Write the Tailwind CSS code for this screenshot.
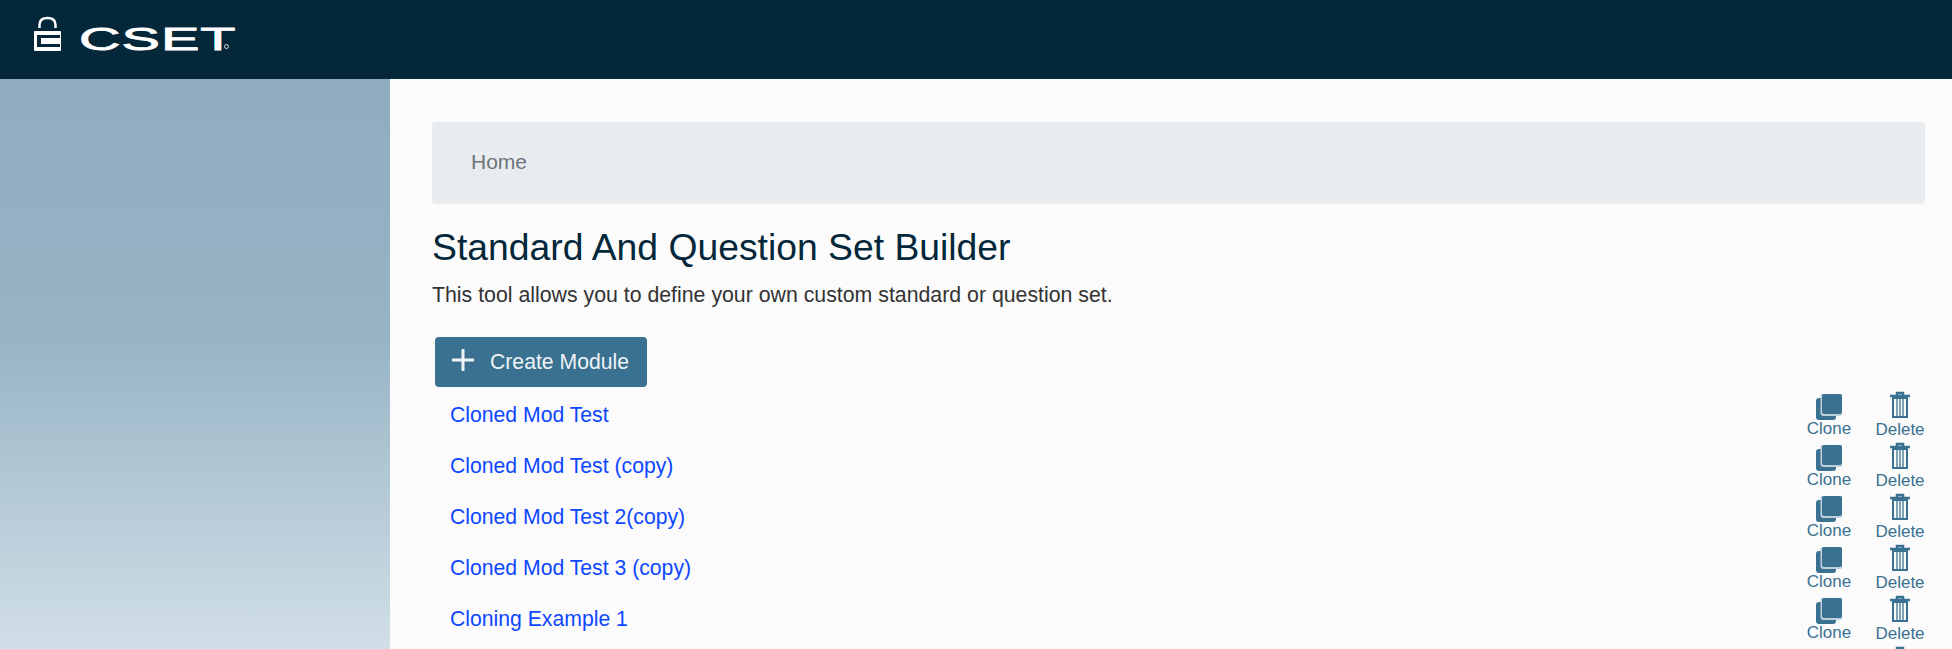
<!DOCTYPE html>
<html><head><meta charset="utf-8"><script src="https://cdn.jsdelivr.net/npm/@tailwindcss/browser@4"></script></head>
<body class="h-[649px] w-[1952px] overflow-hidden bg-[#fbfbfc] font-['Liberation_Sans',sans-serif]">
<header class="relative flex h-[79px] items-start bg-[#04273a] pl-[34px] pt-[16px] text-white">
  <svg width="27" height="36" viewBox="0 0 27 36" fill="none"><path d="M5.500 12V9C5.500 4 8.500 2 13.500 2C18.500 2 21.500 4 21.500 9V12" stroke="#fff" stroke-width="2.500"/><rect x="0" y="15" width="27" height="20" rx="1" fill="#fff"/><rect x="3" y="19" width="23" height="12" fill="#04273a"/><rect x="7" y="22" width="19" height="6" fill="#fff"/></svg>
  <span class="ml-[18px] mt-[7px] origin-left scale-x-[1.83] text-[31.5px] leading-[32px] font-normal tracking-[0.5px] [-webkit-text-stroke:0.8px_#fff]">CSET</span>
  <span class="absolute left-[224px] top-[44px] size-[5px] rounded-full border border-white/80"></span>
</header>
<div class="flex h-[570px]">
  <aside class="h-full w-[390px] shrink-0 bg-gradient-to-b from-[#8fadbf] via-[#97b4c5] via-45% to-[#d1dfe7]"></aside>
  <main class="h-full min-w-0 flex-1 overflow-hidden pl-[42px] pr-[27px] pt-[43px]">
    <nav class="flex h-[82px] items-center rounded-[4px] bg-[#e9ecef] pb-[2px] pl-[39px] text-[21px] text-[#6c757d]">Home</nav>
    <h1 class="mt-[22px] text-[37.300px] leading-[42px] font-normal text-[#04273a]">Standard And Question Set Builder</h1>
    <p class="mt-[12px] text-[21.300px] leading-[31px] text-[#333]">This tool allows you to define your own custom standard or question set.</p>
    <button class="ml-[3px] mt-[26px] flex h-[50px] w-[212px] items-center rounded-[4px] bg-[#3a7190] pl-[16px] text-[21.200px] text-[#eef3f6]">
      <svg width="24" height="24" viewBox="0 0 24 24" class="-mt-[4px] mr-[15px]"><path d="M12 1V23M1 12H23" stroke="#eef3f6" stroke-width="3"/></svg>Create Module
    </button>
    <ul class="text-[21.200px] text-[#0d47ff]">
      <li class="flex h-[51px] items-start justify-between pl-[18px] pr-[1px] pt-[4px]"><a class="mt-[9px] leading-[30px]">Cloned Mod Test</a><div class="flex gap-[23px] text-[17px] text-[#3a7190]"><span class="flex w-[48px] flex-col items-center"><svg width="26" height="26" viewBox="0 0 26 26" class="mt-[3px]"><rect x="0" y="4" width="20" height="22" rx="3" fill="#3a7190"/><rect x="4.500" y="-1" width="22" height="23" rx="3" fill="#bdd0db"/><rect x="6" y="0" width="20" height="20" rx="2" fill="#3a7190"/></svg><span class="leading-[18px]">Clone</span></span><span class="flex w-[48px] flex-col items-center"><svg width="20" height="27" viewBox="0 0 20 27"><path d="M0 5H20M7 4V2H13V4" stroke="#3a7190" stroke-width="2.500" fill="none"/><rect x="3" y="7" width="14" height="19" fill="none" stroke="#3a7190" stroke-width="2"/><path d="M7 8V25M10 8V25M13 8V25" stroke="#3a7190" stroke-width="1.300"/></svg><span class="mt-[3px] leading-[18px]">Delete</span></span></div></li>
      <li class="flex h-[51px] items-start justify-between pl-[18px] pr-[1px] pt-[4px]"><a class="mt-[9px] leading-[30px]">Cloned Mod Test (copy)</a><div class="flex gap-[23px] text-[17px] text-[#3a7190]"><span class="flex w-[48px] flex-col items-center"><svg width="26" height="26" viewBox="0 0 26 26" class="mt-[3px]"><rect x="0" y="4" width="20" height="22" rx="3" fill="#3a7190"/><rect x="4.500" y="-1" width="22" height="23" rx="3" fill="#bdd0db"/><rect x="6" y="0" width="20" height="20" rx="2" fill="#3a7190"/></svg><span class="leading-[18px]">Clone</span></span><span class="flex w-[48px] flex-col items-center"><svg width="20" height="27" viewBox="0 0 20 27"><path d="M0 5H20M7 4V2H13V4" stroke="#3a7190" stroke-width="2.500" fill="none"/><rect x="3" y="7" width="14" height="19" fill="none" stroke="#3a7190" stroke-width="2"/><path d="M7 8V25M10 8V25M13 8V25" stroke="#3a7190" stroke-width="1.300"/></svg><span class="mt-[3px] leading-[18px]">Delete</span></span></div></li>
      <li class="flex h-[51px] items-start justify-between pl-[18px] pr-[1px] pt-[4px]"><a class="mt-[9px] leading-[30px]">Cloned Mod Test 2(copy)</a><div class="flex gap-[23px] text-[17px] text-[#3a7190]"><span class="flex w-[48px] flex-col items-center"><svg width="26" height="26" viewBox="0 0 26 26" class="mt-[3px]"><rect x="0" y="4" width="20" height="22" rx="3" fill="#3a7190"/><rect x="4.500" y="-1" width="22" height="23" rx="3" fill="#bdd0db"/><rect x="6" y="0" width="20" height="20" rx="2" fill="#3a7190"/></svg><span class="leading-[18px]">Clone</span></span><span class="flex w-[48px] flex-col items-center"><svg width="20" height="27" viewBox="0 0 20 27"><path d="M0 5H20M7 4V2H13V4" stroke="#3a7190" stroke-width="2.500" fill="none"/><rect x="3" y="7" width="14" height="19" fill="none" stroke="#3a7190" stroke-width="2"/><path d="M7 8V25M10 8V25M13 8V25" stroke="#3a7190" stroke-width="1.300"/></svg><span class="mt-[3px] leading-[18px]">Delete</span></span></div></li>
      <li class="flex h-[51px] items-start justify-between pl-[18px] pr-[1px] pt-[4px]"><a class="mt-[9px] leading-[30px]">Cloned Mod Test 3 (copy)</a><div class="flex gap-[23px] text-[17px] text-[#3a7190]"><span class="flex w-[48px] flex-col items-center"><svg width="26" height="26" viewBox="0 0 26 26" class="mt-[3px]"><rect x="0" y="4" width="20" height="22" rx="3" fill="#3a7190"/><rect x="4.500" y="-1" width="22" height="23" rx="3" fill="#bdd0db"/><rect x="6" y="0" width="20" height="20" rx="2" fill="#3a7190"/></svg><span class="leading-[18px]">Clone</span></span><span class="flex w-[48px] flex-col items-center"><svg width="20" height="27" viewBox="0 0 20 27"><path d="M0 5H20M7 4V2H13V4" stroke="#3a7190" stroke-width="2.500" fill="none"/><rect x="3" y="7" width="14" height="19" fill="none" stroke="#3a7190" stroke-width="2"/><path d="M7 8V25M10 8V25M13 8V25" stroke="#3a7190" stroke-width="1.300"/></svg><span class="mt-[3px] leading-[18px]">Delete</span></span></div></li>
      <li class="flex h-[51px] items-start justify-between pl-[18px] pr-[1px] pt-[4px]"><a class="mt-[9px] leading-[30px]">Cloning Example 1</a><div class="flex gap-[23px] text-[17px] text-[#3a7190]"><span class="flex w-[48px] flex-col items-center"><svg width="26" height="26" viewBox="0 0 26 26" class="mt-[3px]"><rect x="0" y="4" width="20" height="22" rx="3" fill="#3a7190"/><rect x="4.500" y="-1" width="22" height="23" rx="3" fill="#bdd0db"/><rect x="6" y="0" width="20" height="20" rx="2" fill="#3a7190"/></svg><span class="leading-[18px]">Clone</span></span><span class="flex w-[48px] flex-col items-center"><svg width="20" height="27" viewBox="0 0 20 27"><path d="M0 5H20M7 4V2H13V4" stroke="#3a7190" stroke-width="2.500" fill="none"/><rect x="3" y="7" width="14" height="19" fill="none" stroke="#3a7190" stroke-width="2"/><path d="M7 8V25M10 8V25M13 8V25" stroke="#3a7190" stroke-width="1.300"/></svg><span class="mt-[3px] leading-[18px]">Delete</span></span></div></li>
      <li class="flex h-[51px] items-start justify-between pl-[18px] pr-[1px] pt-[4px]"><a class="mt-[9px] leading-[30px]"></a><div class="flex gap-[23px] text-[17px] text-[#3a7190]"><span class="flex w-[48px] flex-col items-center"><svg width="26" height="26" viewBox="0 0 26 26" class="mt-[3px]"><rect x="0" y="4" width="20" height="22" rx="3" fill="#3a7190"/><rect x="4.500" y="-1" width="22" height="23" rx="3" fill="#bdd0db"/><rect x="6" y="0" width="20" height="20" rx="2" fill="#3a7190"/></svg></span><span class="flex w-[48px] flex-col items-center"><svg width="20" height="27" viewBox="0 0 20 27"><path d="M0 5H20M7 4V2H13V4" stroke="#3a7190" stroke-width="2.500" fill="none"/><rect x="3" y="7" width="14" height="19" fill="none" stroke="#3a7190" stroke-width="2"/><path d="M7 8V25M10 8V25M13 8V25" stroke="#3a7190" stroke-width="1.300"/></svg></span></div></li>
    </ul>
  </main>
</div>
</body></html>
